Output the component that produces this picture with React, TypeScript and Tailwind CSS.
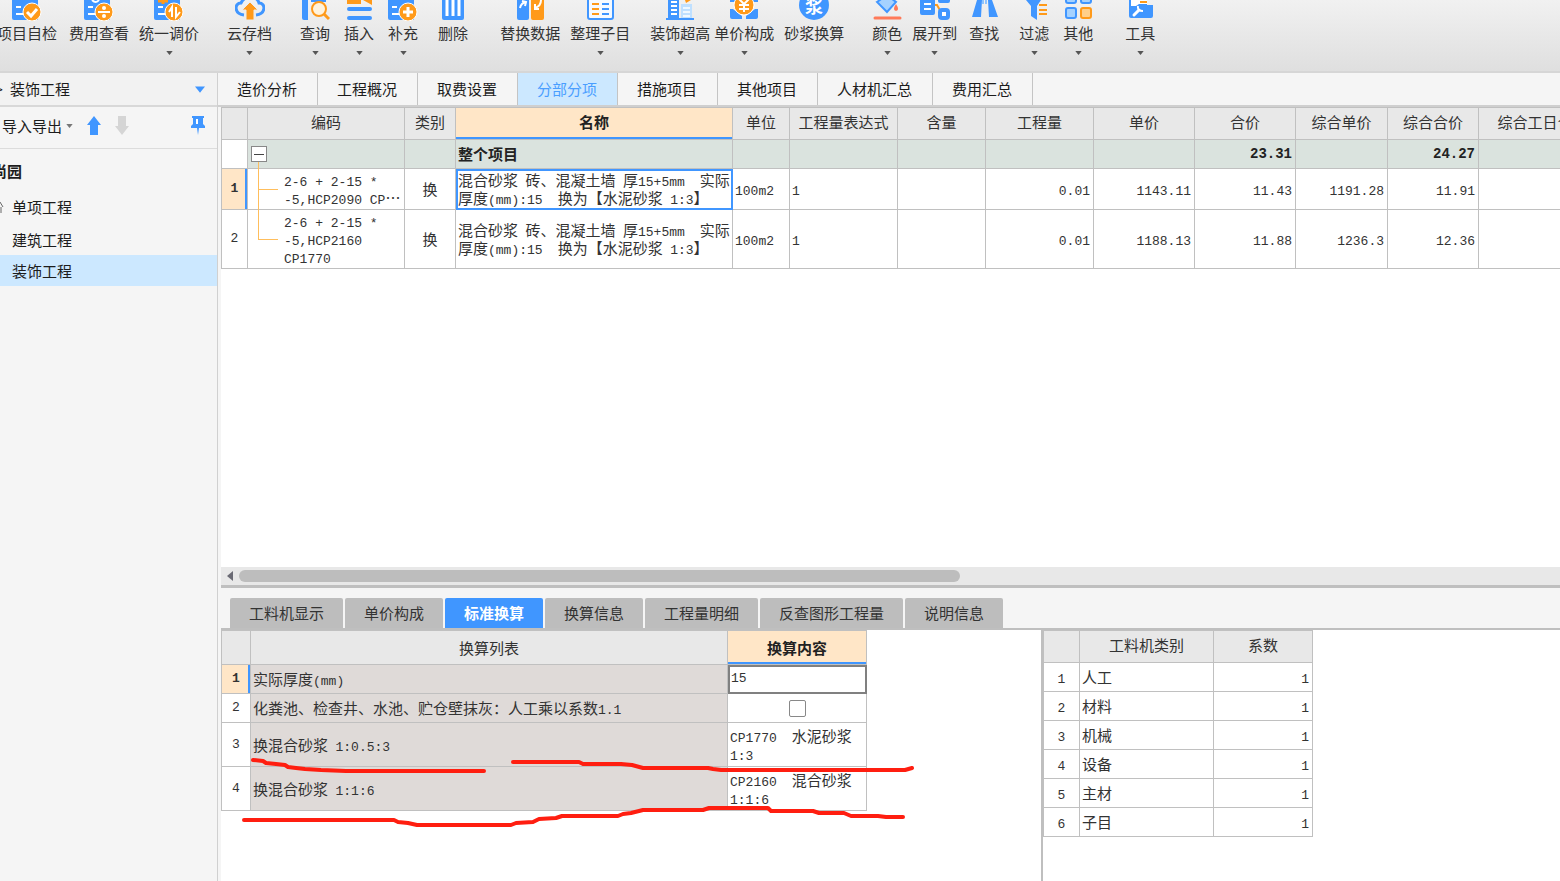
import React from 'react';

const BLUE = '#4096ff';
const ORANGE = '#ff9a1a';

// Base sheet shared by the "document" toolbar icons
function Sheet({ children }: { children?: React.ReactNode }) {
  return (
    <>
      <path fill={BLUE} d="M0 0h26v20H2a2 2 0 0 1-2-2z" />
      <path stroke="#fff" strokeWidth="2" d="M4 7h5M4 14h7" />
      <circle cx="20" cy="12" r="9" fill={ORANGE} stroke="#fff" />
      {children}
    </>
  );
}

const icons: Record<string, React.ReactNode> = {
  check: <Sheet><path stroke="#fff" strokeWidth="3" d="m15 12 4 4 6-7" /></Sheet>,
  fee: (
    <Sheet>
      <path stroke="#fff" strokeWidth="2" d="M14 12h12" />
      <circle cx="20" cy="8" r="2" fill="#fff" />
      <circle cx="20" cy="16" r="2" fill="#fff" />
      <path stroke="#fff" strokeWidth="2" d="M8 0q4 4 7 0" />
    </Sheet>
  ),
  price: (
    <Sheet>
      <path stroke={ORANGE} strokeWidth="3" d="M4 1h10M9 0v4" />
      <path stroke="#fff" strokeWidth="2" d="M18 17V7l-3 5M22 7v10l4-5" />
    </Sheet>
  ),
  cloud: (
    <>
      <path stroke={BLUE} strokeWidth="3" d="M9 15C-1 14-1 3 6 3c2-4 5-6 9-6s8 2 9 6c7 0 7 11-3 12" />
      <path fill={ORANGE} stroke="#ececec" d="m15 2 8 8h-4v10h-8V10H7z" />
    </>
  ),
  query: (
    <>
      <path fill={BLUE} d="M2 0h6v20H4a2 2 0 0 1-2-2zM11 0h15v2H11z" />
      <circle cx="19" cy="9" r="7" stroke={ORANGE} strokeWidth="2" fill="#fff3dd" />
      <path stroke={ORANGE} strokeWidth="3" d="m24 14 5 5" />
    </>
  ),
  insert: (
    <>
      <path stroke={BLUE} strokeWidth="4" strokeLinecap="round" d="M5 9h21M5 18h21" />
      <path fill={ORANGE} d="M3 0h14v4H3zM19 0h9v5z" />
    </>
  ),
  add: <Sheet><path stroke="#fff" strokeWidth="3" d="M15 12h10M20 7v10" /></Sheet>,
  remove: (
    <>
      <path fill={BLUE} d="M4 0h22v18a2 2 0 0 1-2 2H6a2 2 0 0 1-2-2z" />
      <path stroke="#fff" strokeWidth="3" d="M9 0v16M15 0v16M21 0v16" />
    </>
  ),
  replace: (
    <>
      <path fill={BLUE} d="M2 0h12v18a2 2 0 0 1-2 2H4a2 2 0 0 1-2-2z" />
      <path fill={ORANGE} d="M16 0h13v18a2 2 0 0 1-2 2h-9a2 2 0 0 1-2-2z" />
      <path stroke="#fff" strokeWidth="2" d="M5 8q1-5 6-6M7 1l4 1-1 4M26 0q0 6-6 8M20 4v5h4" />
    </>
  ),
  arrange: (
    <>
      <rect x="3" y="-4" width="25" height="23" rx="2" stroke={BLUE} strokeWidth="2" fill="#f5faff" />
      <path stroke={ORANGE} strokeWidth="2" d="M7 4h7M7 9h7M7 14h7" />
      <path stroke={BLUE} strokeWidth="2" d="M17 4h7M17 9h7M17 14h7" />
    </>
  ),
  building: (
    <>
      <path fill="#bfe0ff" d="M16 4h11v15H16z" />
      <path fill={BLUE} d="M3 0h11v19H3z" />
      <path stroke="#fff" strokeWidth="2" d="M6 2h6M6 6h6M6 10h6M6 14h6" />
      <path stroke="#eff8ff" strokeWidth="2" d="M18 8h7M18 12h7M18 16h7" />
      <path stroke={BLUE} strokeWidth="2" d="M1 19h28" />
      <path fill={ORANGE} d="M20 0h6l-5 3z" />
    </>
  ),
  compose: (
    <>
      <path fill={BLUE} d="M1 0h9v2H1zM20 0h9v2h-9zM1 9h3l9 7v3H3a2 2 0 0 1-2-2zM29 9h-3l-9 7v3h10a2 2 0 0 0 2-2z" />
      <circle cx="15" cy="5" r="10" fill={ORANGE} stroke="#fff" />
      <path stroke="#fff" strokeWidth="2" d="m10-1 5 5 5-5M10 5h10M10 9h10M15 4v8" />
    </>
  ),
  mortar: (
    <>
      <circle cx="15" cy="5" r="15" fill={BLUE} />
      <text x="15" y="13" fontSize="18" fontWeight="700" textAnchor="middle" fill="#fff">浆</text>
    </>
  ),
  color: (
    <>
      <path fill="#a5d2ff" stroke={BLUE} strokeWidth="2" d="M5 2 15-5l9 7-9 10z" />
      <path fill="#ff7a59" d="M24 4q4 6 0 7-4-1 0-7" />
      <path stroke="#ff7a59" strokeWidth="3" strokeLinecap="round" d="M3 18h25" />
    </>
  ),
  expand: (
    <>
      <path stroke={ORANGE} strokeWidth="2" d="M14 5h3l4 7" />
      <path fill={BLUE} d="M0 0h15v13a2 2 0 0 1-2 2H2a2 2 0 0 1-2-2zM18 0h12v1a2 2 0 0 1-2 2h-8a2 2 0 0 1-2-2z" />
      <path stroke="#fff" strokeWidth="2" d="M4 4h7M4 9h7" />
      <rect x="20" y="10" width="8" height="8" rx="2" stroke={BLUE} strokeWidth="4" fill="#fff" />
    </>
  ),
  find: (
    <>
      <path fill={BLUE} d="M8 0h5l-1 17H3zM19 0h4l6 17h-9z" />
      <path stroke="#8fc4ff" strokeWidth="2" d="M14 0v4M17 0v4" />
    </>
  ),
  filter: (
    <>
      <path fill={BLUE} d="M7 0h15l-4 6v14l-6-4V6z" />
      <path stroke={ORANGE} strokeWidth="2" d="M20 5h8M20 10h8M20 14h8" />
    </>
  ),
  other: (
    <>
      <g stroke={BLUE} strokeWidth="2" fill="#a5d2ff">
        <rect x="3" y="-7" width="10" height="10" rx="2" />
        <rect x="18" y="-7" width="10" height="10" rx="2" />
        <rect x="3" y="8" width="10" height="10" rx="2" />
      </g>
      <rect x="18" y="8" width="10" height="10" rx="2" stroke={ORANGE} strokeWidth="2" fill="#ffcf8a" />
    </>
  ),
  tool: (
    <>
      <path fill={BLUE} d="M4 0h18v5h6v11a2 2 0 0 1-2 2H6a2 2 0 0 1-2-2z" />
      <path fill="#fff" d="M6 0h16v4h-8l-3 2H6z" />
      <path stroke={ORANGE} strokeWidth="2" d="M15 2h7" />
      <path stroke="#fff" strokeWidth="3" strokeLinecap="round" d="m9 15 5-5" />
      <path stroke="#fff" strokeWidth="2" d="M13 6q-1 5 5 5" />
    </>
  ),
};

const toolbar = [
  { label: '项目自检', icon: 'check', space: '-ml-[3px]' },
  { label: '费用查看', icon: 'fee', space: 'ml-3' },
  { label: '统一调价', icon: 'price', space: 'ml-2.5', menu: true },
  { label: '云存档', icon: 'cloud', space: 'ml-7', menu: true },
  { label: '查询', icon: 'query', space: 'ml-7', menu: true },
  { label: '插入', icon: 'insert', space: 'ml-3.5', menu: true },
  { label: '补充', icon: 'add', space: 'ml-3.5', menu: true },
  { label: '删除', icon: 'remove', space: 'ml-5' },
  { label: '替换数据', icon: 'replace', space: 'ml-8' },
  { label: '整理子目', icon: 'arrange', space: 'ml-2.5', menu: true },
  { label: '装饰超高', icon: 'building', space: 'ml-5', menu: true },
  { label: '单价构成', icon: 'compose', space: 'ml-1', menu: true },
  { label: '砂浆换算', icon: 'mortar', space: 'ml-2.5' },
  { label: '颜色', icon: 'color', space: 'ml-7', menu: true },
  { label: '展开到', icon: 'expand', space: 'ml-2.5', menu: true },
  { label: '查找', icon: 'find', space: 'ml-3' },
  { label: '过滤', icon: 'filter', space: 'ml-5', menu: true },
  { label: '其他', icon: 'other', space: 'ml-3.5', menu: true },
  { label: '工具', icon: 'tool', space: 'ml-8', menu: true },
];

const pageTabs = ['造价分析', '工程概况', '取费设置', '分部分项', '措施项目', '其他项目', '人材机汇总', '费用汇总'];
const detailTabs = ['工料机显示', '单价构成', '标准换算', '换算信息', '工程量明细', '反查图形工程量', '说明信息'];

const columns = [
  { name: '', width: 'w-[26px]' },
  { name: '编码', width: 'w-[157px]' },
  { name: '类别', width: 'w-[51px]' },
  { name: '名称', width: 'w-[277px]' },
  { name: '单位', width: 'w-[57px]' },
  { name: '工程量表达式', width: 'w-[108px]' },
  { name: '含量', width: 'w-[88px]' },
  { name: '工程量', width: 'w-[108px]' },
  { name: '单价', width: 'w-[101px]' },
  { name: '合价', width: 'w-[101px]' },
  { name: '综合单价', width: 'w-[92px]' },
  { name: '综合合价', width: 'w-[91px]' },
  { name: '综合工日合计', width: 'w-[128px]' },
];

const itemName = '混合砂浆\u2002砖、混凝土墙\u2002厚15+5mm\u3000实际\n厚度(mm):15\u3000换为【水泥砂浆\u20021:3】';

const items = [
  { code: '2-6 + 2-15 *\n-5,HCP2090 CP…', qty: '0.01', values: ['1143.11', '11.43', '1191.28', '11.91'] },
  { code: '2-6 + 2-15 *\n-5,HCP2160\nCP1770', qty: '0.01', values: ['1188.13', '11.88', '1236.3', '12.36'] },
];

const categories = ['人工', '材料', '机械', '设备', '主材', '子目'];

// Latin runs are set in the narrow monospace, the rest in the CJK face
function Mixed({ text }: { text: string }) {
  return (
    <span className="whitespace-pre">
      {text.split(/([\x20-\x7e]+)/).map((part, i) =>
        i % 2 ? <span key={i} className="font-['Liberation_Mono',monospace] text-[13px] leading-none">{part}</span> : part
      )}
    </span>
  );
}

function Caret({ className }: { className: string }) {
  return (
    <svg viewBox="0 0 8 5" className={className} fill="currentColor"><path d="M0 0h8L4 5z" /></svg>
  );
}

function Toolbar() {
  return (
    <header className="flex h-[73px] shrink-0 items-start overflow-hidden border-b-2 border-[#d6d6d6] bg-linear-to-b from-[#f1f1f1] to-[#dfdfdf]">
      {toolbar.map((t) => (
        <button key={t.label} className={`flex shrink-0 flex-col items-center whitespace-nowrap text-[#333] ${t.space}`}>
          <svg viewBox="0 0 30 21" width="30" height="21" fill="none">{icons[t.icon]}</svg>
          <span className="leading-6">{t.label}</span>
          {t.menu && <Caret className="mt-1.5 h-1 w-[7px] text-[#555]" />}
        </button>
      ))}
    </header>
  );
}

function Sidebar() {
  return (
    <aside className="w-[218px] shrink-0 border-r border-[#d0d0d0] bg-[#f5f5f5]">
      <button className="flex h-[34px] w-full items-center border-b-2 border-[#d8d8d8] bg-[#f2f2f2] pr-3 text-left">
        <span className="-ml-1 w-3.5 text-xs">&gt;</span>
        装饰工程
        <Caret className="ml-auto h-[7px] w-2.5 text-[#4096ff]" />
      </button>
      <div className="flex h-[42px] items-center border-b border-[#dcdcdc] pr-3 pb-1 pl-0.5">
        <button className="flex items-center">导入导出<Caret className="ml-1 h-1 w-[7px] text-[#777]" /></button>
        <button aria-label="上移" className="ml-3.5 text-[#4096ff]">
          <svg viewBox="0 0 14 19" width="14" height="19" fill="currentColor"><path d="m7 0 7 9h-3v10H3V9H0z" /></svg>
        </button>
        <button aria-label="下移" className="ml-3.5 text-[#d5d5d5]">
          <svg viewBox="0 0 14 19" width="14" height="19" fill="currentColor"><path d="m7 19 7-9h-3V0H3v10H0z" /></svg>
        </button>
        <button aria-label="固定" className="ml-auto text-[#4096ff]">
          <svg viewBox="0 0 14 19" width="14" height="19" fill="currentColor">
            <path d="M1 0h12v2h-1v6l2 2v2H8l-1 7-1-7H0v-2l2-2V2H1z" />
            <path fill="#fff" d="M5 3h2v5H5z" />
          </svg>
        </button>
      </div>
      <ul className="pt-1">
        <li><button className="-ml-2 h-9 w-full text-left font-bold">尚园</button></li>
        <li>
          <button className="flex h-9 w-full items-center text-left">
            <svg viewBox="0 0 12 16" width="12" height="16" fill="none" stroke="#666"><path d="M-4 7 0 3l3 5M1 8v6M-1 8v6" /></svg>
            单项工程
          </button>
        </li>
        <li><button className="h-[30px] w-full pl-3 text-left">建筑工程</button></li>
        <li><button className="h-[31px] w-full bg-[#cce8ff] pl-3 text-left">装饰工程</button></li>
      </ul>
    </aside>
  );
}

function ItemGrid() {
  const cell = 'border border-[#c0c0c0]';
  return (
    <div className="min-h-0 flex-1 overflow-hidden bg-white">
      <table className="w-[1385px] table-fixed border-collapse text-[#333]">
        <thead>
          <tr className="h-8 bg-[#e8e8e8]">
            {columns.map((c) => (
              <th
                key={c.name}
                className={`${cell} pb-1 ${c.width} ${c.name === '名称' ? 'bg-[#ffe6c7] font-bold text-[#222] shadow-[inset_0_-2px_0_#4096ff]' : 'font-normal'}`}
              >
                {c.name}
              </th>
            ))}
          </tr>
        </thead>
        <tbody>
          <tr className="h-[29px] bg-[#dae3de] text-[#222]">
            <td className={`${cell} bg-white`} />
            <td className={`${cell} relative`}>
              <button aria-label="折叠" className="ml-[3px] flex size-4 items-center justify-center border border-[#888] bg-white">
                <span className="h-px w-2.5 bg-[#444]" />
              </button>
              <span className="absolute bottom-0 left-2.5 h-1.5 w-px bg-[#ffbe5c]" />
            </td>
            <td className={cell} />
            <td className={`${cell} pl-0.5 font-bold`}>整个项目</td>
            <td className={cell} />
            <td className={cell} />
            <td className={cell} />
            <td className={cell} />
            <td className={cell} />
            <td className={`${cell} pr-[3px] text-right font-['Liberation_Mono',monospace] text-sm font-bold`}>23.31</td>
            <td className={cell} />
            <td className={`${cell} pr-[3px] text-right font-['Liberation_Mono',monospace] text-sm font-bold`}>24.27</td>
            <td className={cell} />
          </tr>
          {items.map((item, i) => (
            <tr key={i} className={`leading-[18px] ${i === 0 ? 'h-[41px]' : 'h-[59px]'}`}>
              <td className={`${cell} text-center font-['Liberation_Mono',monospace] text-[13px] ${i === 0 ? 'bg-[#ffe6c7] font-bold shadow-[inset_-2px_0_0_#4096ff]' : ''}`}>{i + 1}</td>
              <td className={`${cell} relative pl-9`}>
                <span className={`absolute -top-px left-2.5 w-px bg-[#ffbe5c] ${i === 0 ? '-bottom-px' : 'bottom-1/2'}`} />
                <span className="absolute top-1/2 left-2.5 h-px w-5 bg-[#ffbe5c]" />
                <Mixed text={item.code} />
              </td>
              <td className={`${cell} text-center`}>换</td>
              <td className={`${cell} pl-0.5 ${i === 0 ? 'outline-2 -outline-offset-2 outline-[#4096ff]' : ''}`}><Mixed text={itemName} /></td>
              <td className={`${cell} pl-0.5`}><Mixed text="100m2" /></td>
              <td className={`${cell} pl-0.5`}><Mixed text="1" /></td>
              <td className={cell} />
              <td className={`${cell} pr-[3px] text-right`}><Mixed text={item.qty} /></td>
              {item.values.map((v) => <td key={v} className={`${cell} pr-[3px] text-right`}><Mixed text={v} /></td>)}
              <td className={cell} />
            </tr>
          ))}
        </tbody>
      </table>
    </div>
  );
}

function ConversionTable() {
  const cell = 'border border-[#c0c0c0]';
  const num = `${cell} text-center font-['Liberation_Mono',monospace] text-[13px]`;
  const label = `${cell} bg-[#dfdad8] pl-0.5`;
  return (
    <table className="w-[645px] table-fixed border-collapse text-[#333]">
      <thead>
        <tr className="h-[34px] bg-[#e8e8e8]">
          <th className={`${cell} w-[29px]`} />
          <th className={`${cell} w-[477px] font-normal`}>换算列表</th>
          <th className={`${cell} w-[139px] bg-[#ffe6c7] font-bold text-[#222] shadow-[inset_0_-2px_0_#4096ff]`}>换算内容</th>
        </tr>
      </thead>
      <tbody>
        <tr className="h-[29px]">
          <td className={`${num} bg-[#ffe6c7] font-bold shadow-[inset_-2px_0_0_#4096ff]`}>1</td>
          <td className={label}><label htmlFor="thickness"><Mixed text="实际厚度(mm)" /></label></td>
          <td className={`${cell} outline-2 -outline-offset-2 outline-[#808080]`}>
            <input id="thickness" defaultValue="15" className="block w-full bg-transparent pl-[3px] font-['Liberation_Mono',monospace] text-[13px] outline-none" />
          </td>
        </tr>
        <tr className="h-[29px]">
          <td className={num}>2</td>
          <td className={label}><label htmlFor="factor"><Mixed text="化粪池、检查井、水池、贮仓壁抹灰：人工乘以系数1.1" /></label></td>
          <td className={cell}>
            <input id="factor" type="checkbox" className="mx-auto block size-[17px] appearance-none rounded-xs border border-[#888] bg-white" />
          </td>
        </tr>
        <tr className="h-11 leading-[18px]">
          <td className={num}>3</td>
          <td className={label}><Mixed text={'换混合砂浆\u20021:0.5:3'} /></td>
          <td className={`${cell} pl-0.5`}><Mixed text={'CP1770\u3000水泥砂浆\n1:3'} /></td>
        </tr>
        <tr className="h-11 leading-[18px]">
          <td className={num}>4</td>
          <td className={label}><Mixed text={'换混合砂浆\u20021:1:6'} /></td>
          <td className={`${cell} pl-0.5`}><Mixed text={'CP2160\u3000混合砂浆\n1:1:6'} /></td>
        </tr>
      </tbody>
    </table>
  );
}

function FactorTable() {
  const cell = 'border border-[#c0c0c0]';
  return (
    <table className="w-[270px] table-fixed border-collapse self-start text-[#333]">
      <thead>
        <tr className="h-8 bg-[#e8e8e8]">
          <th className={`${cell} w-9`} />
          <th className={`${cell} w-[134px] pb-1 font-normal`}>工料机类别</th>
          <th className={`${cell} w-[99px] pb-1 font-normal`}>系数</th>
        </tr>
      </thead>
      <tbody>
        {categories.map((c, i) => (
          <tr key={c} className="h-[29px]">
            <td className={`${cell} text-center`}><Mixed text={String(i + 1)} /></td>
            <td className={`${cell} pl-0.5`}>{c}</td>
            <td className={`${cell} pr-[3px] text-right`}><Mixed text="1" /></td>
          </tr>
        ))}
      </tbody>
    </table>
  );
}

// Freehand red pen marks drawn over the conversion rows
function PenMarks() {
  return (
    <svg viewBox="0 0 700 80" width="700" height="80" fill="none" stroke="#ff1e10" strokeWidth="4" strokeLinecap="round" strokeLinejoin="round" className="pointer-events-none absolute top-[120px] left-0">
      <path d="M32 10l10 1 3 2 10 1 9 1 3 2 8 1 9 1 16 1 25 1h138" />
      <path d="M292 12h66l4 2h38l11 1 11 3h65l5 1 8 1h184l7-2" />
      <path d="M23 70h150l4 2 10 1 9 2h94l5-2 17-1 6-3 17-1 6-2h56l5-2 8-1 12-3h60l6-2h59l3 3h42l6 2h25l7 3h27l8 1h17" />
    </svg>
  );
}

export default function App() {
  return (
    <div lang="zh-CN" className="flex h-screen flex-col overflow-hidden bg-[#f5f5f5] font-['Noto_Sans_CJK_SC',sans-serif] text-[15px] leading-5 text-[#1c1c1c]">
      <Toolbar />
      <div className="flex min-h-0 flex-1">
        <Sidebar />
        <main className="flex min-w-0 flex-1 flex-col">
          <nav className="flex h-[34px] shrink-0 border-b-2 border-[#cfcfcf]">
            {pageTabs.map((t) => (
              <button key={t} className={`border-r border-[#c4c4c4] px-5 pl-[19px] ${t === '分部分项' ? 'bg-[#cce8ff] text-[#4a9eff]' : ''}`}>{t}</button>
            ))}
          </nav>
          <div className="flex min-h-0 flex-1 flex-col pl-[3px]">
            <ItemGrid />
            <div className="flex h-[18px] shrink-0 items-center bg-[#e8e8e8]">
              <svg viewBox="0 0 6 10" width="6" height="10" className="mx-1.5" fill="#6b6b75"><path d="M6 0v10L0 5z" /></svg>
              <div className="h-3 w-7/13 rounded-full bg-[#bdbdbd]" />
            </div>
            <section className="shrink-0 border-t-3 border-[#bfbfbf]">
              <div className="flex gap-0.5 border-b-2 border-[#bfbfbf] pt-2.5 pl-[9px]">
                {detailTabs.map((t) => (
                  <button key={t} className={`h-[30px] rounded-t-xs px-[19px] ${t === '标准换算' ? 'bg-[#4096ff] font-bold text-white' : 'bg-[#bdbdbd] text-[#333]'}`}>{t}</button>
                ))}
              </div>
              <div className="relative flex bg-white">
                <div className="w-[822px] shrink-0 border-r-2 border-[#bfbfbf] pb-[70px]"><ConversionTable /></div>
                <FactorTable />
                <PenMarks />
              </div>
            </section>
          </div>
        </main>
      </div>
    </div>
  );
}
